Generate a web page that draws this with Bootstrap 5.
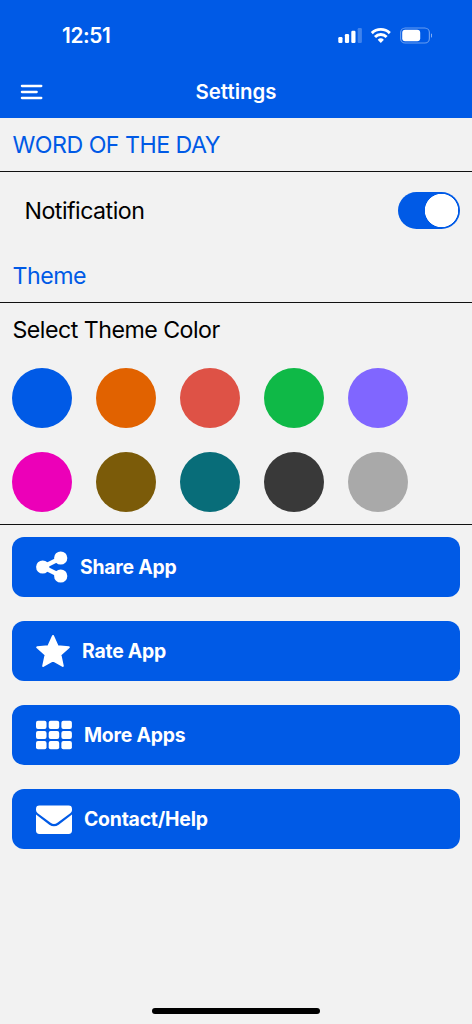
<!DOCTYPE html>
<html lang="en">
<head>
<meta charset="utf-8">
<meta name="viewport" content="width=device-width, initial-scale=1">
<title>Settings</title>
<link href="https://cdn.jsdelivr.net/npm/bootstrap@5.3.0/dist/css/bootstrap.min.css" rel="stylesheet">
<style>
:root{--app-blue:#005ae6}
body{font-family:Inter,"Liberation Sans",sans-serif;background:#f2f2f2;color:#000;height:1024px;overflow:hidden}
svg{display:block;flex:none}
.app-header{background:var(--app-blue);height:118px;color:#fff}
.status-bar{height:70px;padding:0 40px 0 62px}
.clock{font-size:20.8px;font-weight:600;letter-spacing:-.35px;line-height:24px;padding-top:1px}
.title-bar{height:43px;padding:0 20px;display:grid;grid-template-columns:60px 1fr 60px;align-items:center}
.title-bar h1{font-size:20.4px;font-weight:600;letter-spacing:.05px;line-height:24px}
.section-title,.label-text{font-size:23.2px;line-height:30px;font-weight:400;letter-spacing:-.52px}
.section-title{color:var(--app-blue);height:54px;padding:0 12.500px;border-bottom:1.4px solid #111}
.setting-row{height:77px;padding:0 12px 0 24.500px}
.form-switch .form-check-input{width:62px;height:37px;border:0;margin:0;box-shadow:none}
.form-switch .form-check-input:checked{background-color:var(--app-blue);background-image:radial-gradient(circle,#fff 16.300px,transparent 17px);background-size:37px 37px;background-position:right 0 center}
.swatches{display:grid;grid-template-columns:repeat(5,60px);gap:24px;padding:0 12px}
.swatch{width:60px;height:60px;border:0;padding:0}
.theme-panel{height:222px;border-bottom:1.4px solid #111}
.theme-panel .label-text{height:65px;padding:12px 12.500px 0}
.actions{padding:12.4px 12px 0;gap:24px}
.action-btn{height:60px;border-radius:12px;background:var(--app-blue)!important;color:#fff!important;font-size:19.4px;line-height:24px;font-weight:700;letter-spacing:-.22px;padding:0 24px;gap:12px;border:0}
.home-bar{width:168px;height:6px;background:#000}
</style>
</head>
<body class="d-flex flex-column">
<header class="app-header">
  <div class="status-bar d-flex align-items-center justify-content-between">
    <span class="clock">12:51</span>
    <svg width="94" height="18" viewBox="338 26 94 18" fill="#fff">
      <rect x="338.3" y="37" width="4.2" height="6" rx="1.2"/><rect x="344.9" y="34" width="4.2" height="9" rx="1.2"/><rect x="351.3" y="30.8" width="4.2" height="12.2" rx="1.2"/><rect x="357.7" y="28" width="4.2" height="15" rx="1.2" opacity=".25"/>
      <g fill="none" stroke="#fff" stroke-width="2.9"><path d="M371.800 33.100a12.800 12.800 0 0 1 18 0"/><path d="M375 36.900a8.200 8.200 0 0 1 11.600 0"/></g>
      <path d="M377.700 39.700a4.500 4.500 0 0 1 6.200 0l-3.100 3.200z"/>
      <rect x="400.6" y="28" width="28.8" height="15" rx="4.6" fill="none" stroke="#fff" stroke-width="1.2" opacity=".4"/>
      <rect x="402.2" y="29.7" width="18" height="11.5" rx="3"/><path d="M431 33.400q1.500.7 1.500 2.100t-1.500 2.100z" opacity=".5"/>
    </svg>
  </div>
  <div class="title-bar">
    <svg width="24" height="16" viewBox="0 0 24 16" stroke="#fff" stroke-width="2.300" stroke-linecap="round"><path d="M1.900 2h19.400M1.900 8h14.800M1.900 14h19.400"/></svg>
    <h1 class="m-0 text-center">Settings</h1>
  </div>
</header>
<main class="flex-grow-1">
  <h2 class="section-title m-0 d-flex align-items-center"><span>WORD OF THE DAY</span></h2>
  <div class="setting-row d-flex align-items-center justify-content-between">
    <label class="label-text" for="notify">Notification</label>
    <div class="form-check form-switch m-0 p-0">
      <input class="form-check-input float-none d-block" type="checkbox" role="switch" id="notify" checked>
    </div>
  </div>
  <h2 class="section-title m-0 d-flex align-items-center"><span>Theme</span></h2>
  <section class="theme-panel">
    <div class="label-text">Select Theme Color</div>
    <div class="swatches">
      <button class="swatch rounded-circle" style="background:#005ae6" aria-label="Blue"></button>
      <button class="swatch rounded-circle" style="background:#e16200" aria-label="Orange"></button>
      <button class="swatch rounded-circle" style="background:#de5246" aria-label="Red"></button>
      <button class="swatch rounded-circle" style="background:#0fb947" aria-label="Green"></button>
      <button class="swatch rounded-circle" style="background:#8066ff" aria-label="Violet"></button>
      <button class="swatch rounded-circle" style="background:#ec00b8" aria-label="Pink"></button>
      <button class="swatch rounded-circle" style="background:#7b5b09" aria-label="Brown"></button>
      <button class="swatch rounded-circle" style="background:#086d79" aria-label="Teal"></button>
      <button class="swatch rounded-circle" style="background:#393939" aria-label="Charcoal"></button>
      <button class="swatch rounded-circle" style="background:#a9a9a9" aria-label="Gray"></button>
    </div>
  </section>
  <div class="actions d-flex flex-column">
    <button class="action-btn btn d-flex align-items-center">
      <svg width="32" height="32" viewBox="0 0 32 32" fill="#fff"><path d="M25 7 7 16l18 9" fill="none" stroke="#fff" stroke-width="4.600"/><circle cx="6.7" cy="16" r="6.6"/><circle cx="24.7" cy="7" r="6.6"/><circle cx="24.7" cy="25" r="6.6"/></svg>
      <span>Share App</span>
    </button>
    <button class="action-btn btn d-flex align-items-center">
      <svg width="34" height="34" viewBox="0 0 34 34" fill="#fff" stroke="#fff" stroke-width="2" stroke-linejoin="round"><path d="m17 2 4.600 10.200 11.200 1.100-8.400 7.500 2.400 11.200L17 26.400 7.200 32l2.400-11.200-8.400-7.500 11.200-1.100z"/></svg>
      <span>Rate App</span>
    </button>
    <button class="action-btn btn d-flex align-items-center">
      <svg width="36" height="30" viewBox="0 0 36.600 30" preserveAspectRatio="none" fill="#fff"><rect y=".8" width="10.7" height="8.2" rx="2"/><rect x="12.9" y=".8" width="10.7" height="8.2" rx="2"/><rect x="25.8" y=".8" width="10.7" height="8.2" rx="2"/><rect y="10.9" width="10.7" height="8.2" rx="2"/><rect x="12.9" y="10.9" width="10.7" height="8.2" rx="2"/><rect x="25.8" y="10.9" width="10.7" height="8.2" rx="2"/><rect y="21.1" width="10.7" height="8.2" rx="2"/><rect x="12.900" y="21.1" width="10.7" height="8.2" rx="2"/><rect x="25.8" y="21.1" width="10.7" height="8.2" rx="2"/></svg>
      <span>More Apps</span>
    </button>
    <button class="action-btn btn d-flex align-items-center">
      <svg width="36" height="30" viewBox="0 -1.500 36 30" fill="#fff"><path d="M3.400 0h29.200A3.400 3.400 0 0 1 36 3.400v1.100c0 1.300-.6 2.400-1.700 3.200L21.400 17.300q-3.400 2.600-6.800 0L1.700 7.700A3.900 3.900 0 0 1 0 4.500V3.400A3.400 3.400 0 0 1 3.400 0z"/><path d="M0 9.100 13.300 19.200q4.700 3.200 9.400 0L36 9.100v16a3.400 3.400 0 0 1-3.400 3.400H3.400A3.400 3.400 0 0 1 0 25.100z"/></svg>
      <span>Contact/Help</span>
    </button>
  </div>
</main>
<footer class="d-flex justify-content-center"><div class="home-bar rounded-pill" style="margin-bottom:10px"></div></footer>
<script src="https://cdn.jsdelivr.net/npm/bootstrap@5.3.0/dist/js/bootstrap.bundle.min.js"></script>
</body>
</html>
